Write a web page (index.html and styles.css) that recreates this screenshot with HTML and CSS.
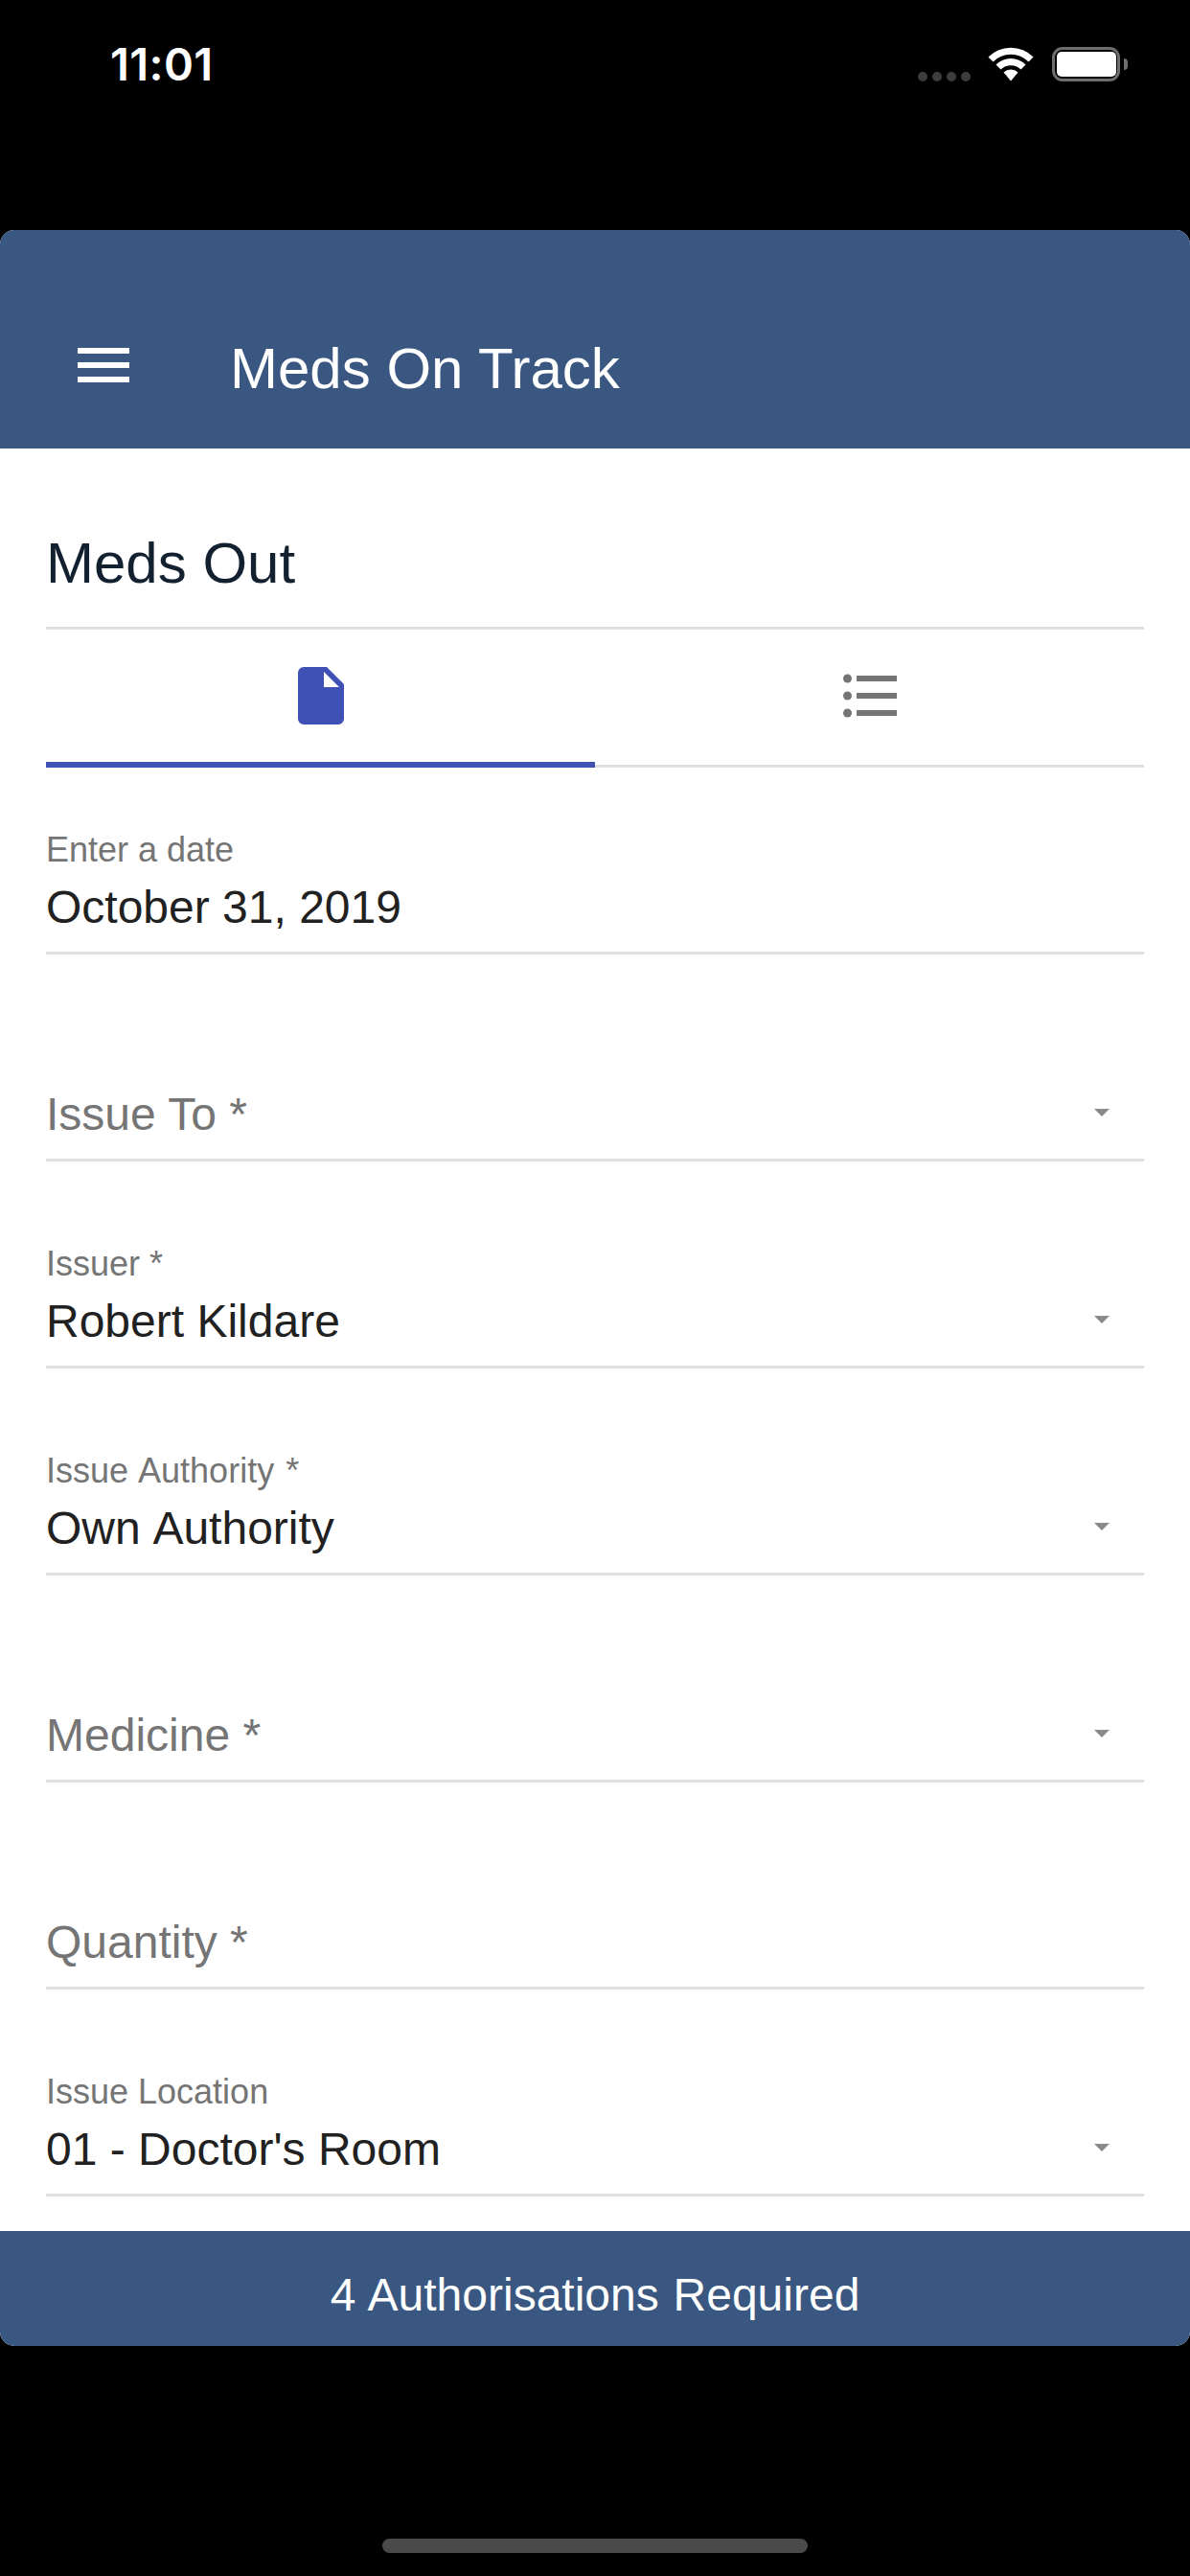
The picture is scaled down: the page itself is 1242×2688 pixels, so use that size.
FILE: index.html
```html
<!DOCTYPE html>
<html>
<head>
    <title>Meds On Track</title>
    <link rel="stylesheet" href="styles.css">
</head>
<body>
    <div class="status-bar">
        <span class="time">11:01</span>
        <div class="status-icons">
            <div class="signal"><i></i><i></i><i></i><i></i></div>
            <svg class="wifi" width="48" height="36" viewBox="0 0 48 36">
                <path d="M0.5 10.5 A33 33 0 0 1 47.5 10.5 L42.5 15.5 A26 26 0 0 0 5.5 15.5 Z" fill="#fff"/>
                <path d="M8.5 18.5 A22 22 0 0 1 39.5 18.5 L34.5 23.5 A15 15 0 0 0 13.5 23.5 Z" fill="#fff"/>
                <path d="M16.5 26.5 A11 11 0 0 1 31.5 26.5 L24 35.5 Z" fill="#fff"/>
            </svg>
            <div class="battery"><div class="battery-fill"></div></div>
            <div class="battery-cap"></div>
        </div>
    </div>

    <div class="app">
        <header class="toolbar">
            <div class="menu-icon"><i></i><i></i><i></i></div>
            <h1 class="toolbar-title">Meds On Track</h1>
        </header>

        <main class="content">
            <h2 class="page-title">Meds Out</h2>
            <div class="tabs">
                <div class="tab tab-active">
                    <svg width="48" height="60" viewBox="0 0 48 60">
                        <path d="M6 0 H30 L48 18 V54 A6 6 0 0 1 42 60 H6 A6 6 0 0 1 0 54 V6 A6 6 0 0 1 6 0 Z M27 5 V21 H43 Z" fill="#3f51b5" fill-rule="evenodd"/>
                    </svg>
                </div>
                <div class="tab">
                    <svg width="56" height="48" viewBox="0 0 56 48">
                        <circle cx="4.5" cy="6" r="4.5" fill="#757575"/>
                        <circle cx="4.5" cy="24" r="4.5" fill="#757575"/>
                        <circle cx="4.5" cy="42" r="4.5" fill="#757575"/>
                        <rect x="14" y="3" width="42" height="6" fill="#757575"/>
                        <rect x="14" y="21" width="42" height="6" fill="#757575"/>
                        <rect x="14" y="39" width="42" height="6" fill="#757575"/>
                    </svg>
                </div>
            </div>

            <div class="field field-first">
                <label class="field-label">Enter a date</label>
                <div class="field-value">October 31, 2019</div>
            </div>
            <div class="field field-select">
                <div class="field-placeholder">Issue To *</div>
            </div>
            <div class="field field-select">
                <label class="field-label">Issuer *</label>
                <div class="field-value">Robert Kildare</div>
            </div>
            <div class="field field-select">
                <label class="field-label wide-word">Issue Authority *</label>
                <div class="field-value wide-word">Own Authority</div>
            </div>
            <div class="field field-select">
                <div class="field-placeholder">Medicine *</div>
            </div>
            <div class="field">
                <div class="field-placeholder">Quantity *</div>
            </div>
            <div class="field field-select">
                <label class="field-label">Issue Location</label>
                <div class="field-value">01 - Doctor's Room</div>
            </div>
        </main>

        <footer class="auth-bar">4 Authorisations Required</footer>
    </div>

    <div class="home-area">
        <div class="home-indicator"></div>
    </div>
</body>
</html>
```

FILE: styles.css
```css
* {
    box-sizing: border-box;
}

html,
body {
    margin: 0;
    height: 2688px;
    overflow: hidden;
}

body {
    background-color: #000;
    font-family: "Liberation Sans", Arial, sans-serif;
}

.status-bar {
    height: 240px;
    padding: 39px 65px 0 115px;
    display: flex;
    justify-content: space-between;
    align-items: flex-start;
    color: #fff;
}

.time {
    font-family: Inter, sans-serif;
    font-size: 47px;
    font-weight: 600;
    line-height: 56px;
    letter-spacing: 0.4px;
}

.status-icons {
    display: flex;
    align-items: flex-start;
    padding-top: 10px;
}

.signal {
    display: flex;
    gap: 5px;
    margin-top: 26px;
    margin-right: 18px;
}

.signal i {
    width: 10px;
    height: 10px;
    border-radius: 50%;
    background-color: #3d3d3d;
}

.wifi {
    display: block;
    margin-right: 19px;
}

.battery {
    width: 71px;
    height: 36px;
    padding: 2px 1.5px;
    border: 3.5px solid #6e6e6e;
    border-radius: 11px;
}

.battery-fill {
    height: 100%;
    background-color: #fff;
    border-radius: 5px;
}

.battery-cap {
    width: 4px;
    height: 12px;
    margin: 12px 0 0 4px;
    background-color: #6e6e6e;
    border-radius: 0 4px 4px 0;
}

.app {
    height: 2208px;
    display: flex;
    flex-direction: column;
    background-color: #fff;
    border-radius: 15px;
    overflow: hidden;
}

.toolbar {
    height: 228px;
    flex-shrink: 0;
    display: flex;
    align-items: flex-end;
    padding: 0 0 48px 81px;
    background-color: #395781;
    color: #fff;
}

.menu-icon {
    width: 54px;
    height: 36px;
    margin-bottom: 21px;
    display: flex;
    flex-direction: column;
    justify-content: space-between;
}

.menu-icon i {
    height: 6px;
    background-color: #fff;
}

.toolbar-title {
    margin: 0 0 0 105px;
    font-size: 60px;
    font-weight: normal;
    line-height: 70px;
}

.content {
    flex: 1;
    padding: 0 48px;
}

.page-title {
    margin: 0;
    height: 189px;
    padding-top: 85px;
    font-size: 60px;
    font-weight: normal;
    line-height: 70px;
    color: #122030;
    border-bottom: 3px solid #e0e0e0;
}

.tabs {
    display: flex;
    height: 144px;
    border-bottom: 3px solid #e0e0e0;
}

.tab {
    flex: 1;
    display: flex;
    justify-content: center;
    align-items: center;
    padding-bottom: 3px;
}

.tab-active {
    height: 144px;
    padding-bottom: 0;
    border-bottom: 6px solid #3f51b5;
}

.field {
    height: 216px;
    display: flex;
    flex-direction: column;
    justify-content: flex-end;
    padding-bottom: 18px;
    border-bottom: 3px solid #e0e0e0;
    position: relative;
}

.field-first {
    height: 195px;
}

.field-select::after {
    content: "";
    position: absolute;
    right: 36px;
    bottom: 44px;
    border-left: 8.5px solid transparent;
    border-right: 8.5px solid transparent;
    border-top: 8.5px solid #8a8a8a;
}

.field-label {
    font-size: 36px;
    line-height: 42px;
    color: #757575;
    margin-bottom: 11px;
}

.field-value {
    font-size: 48px;
    line-height: 56px;
    color: #212121;
}

.field-placeholder {
    font-size: 48px;
    line-height: 56px;
    color: #757575;
}

.wide-word {
    word-spacing: 2px;
}

.auth-bar {
    height: 120px;
    flex-shrink: 0;
    display: flex;
    align-items: center;
    justify-content: center;
    padding-top: 12px;
    background-color: #395781;
    color: #fff;
    font-size: 48px;
    word-spacing: 1.5px;
}

.home-area {
    height: 240px;
    padding-top: 201px;
    display: flex;
    justify-content: center;
}

.home-indicator {
    width: 444px;
    height: 15px;
    background-color: #4a4a4a;
    border-radius: 8px;
}
```
